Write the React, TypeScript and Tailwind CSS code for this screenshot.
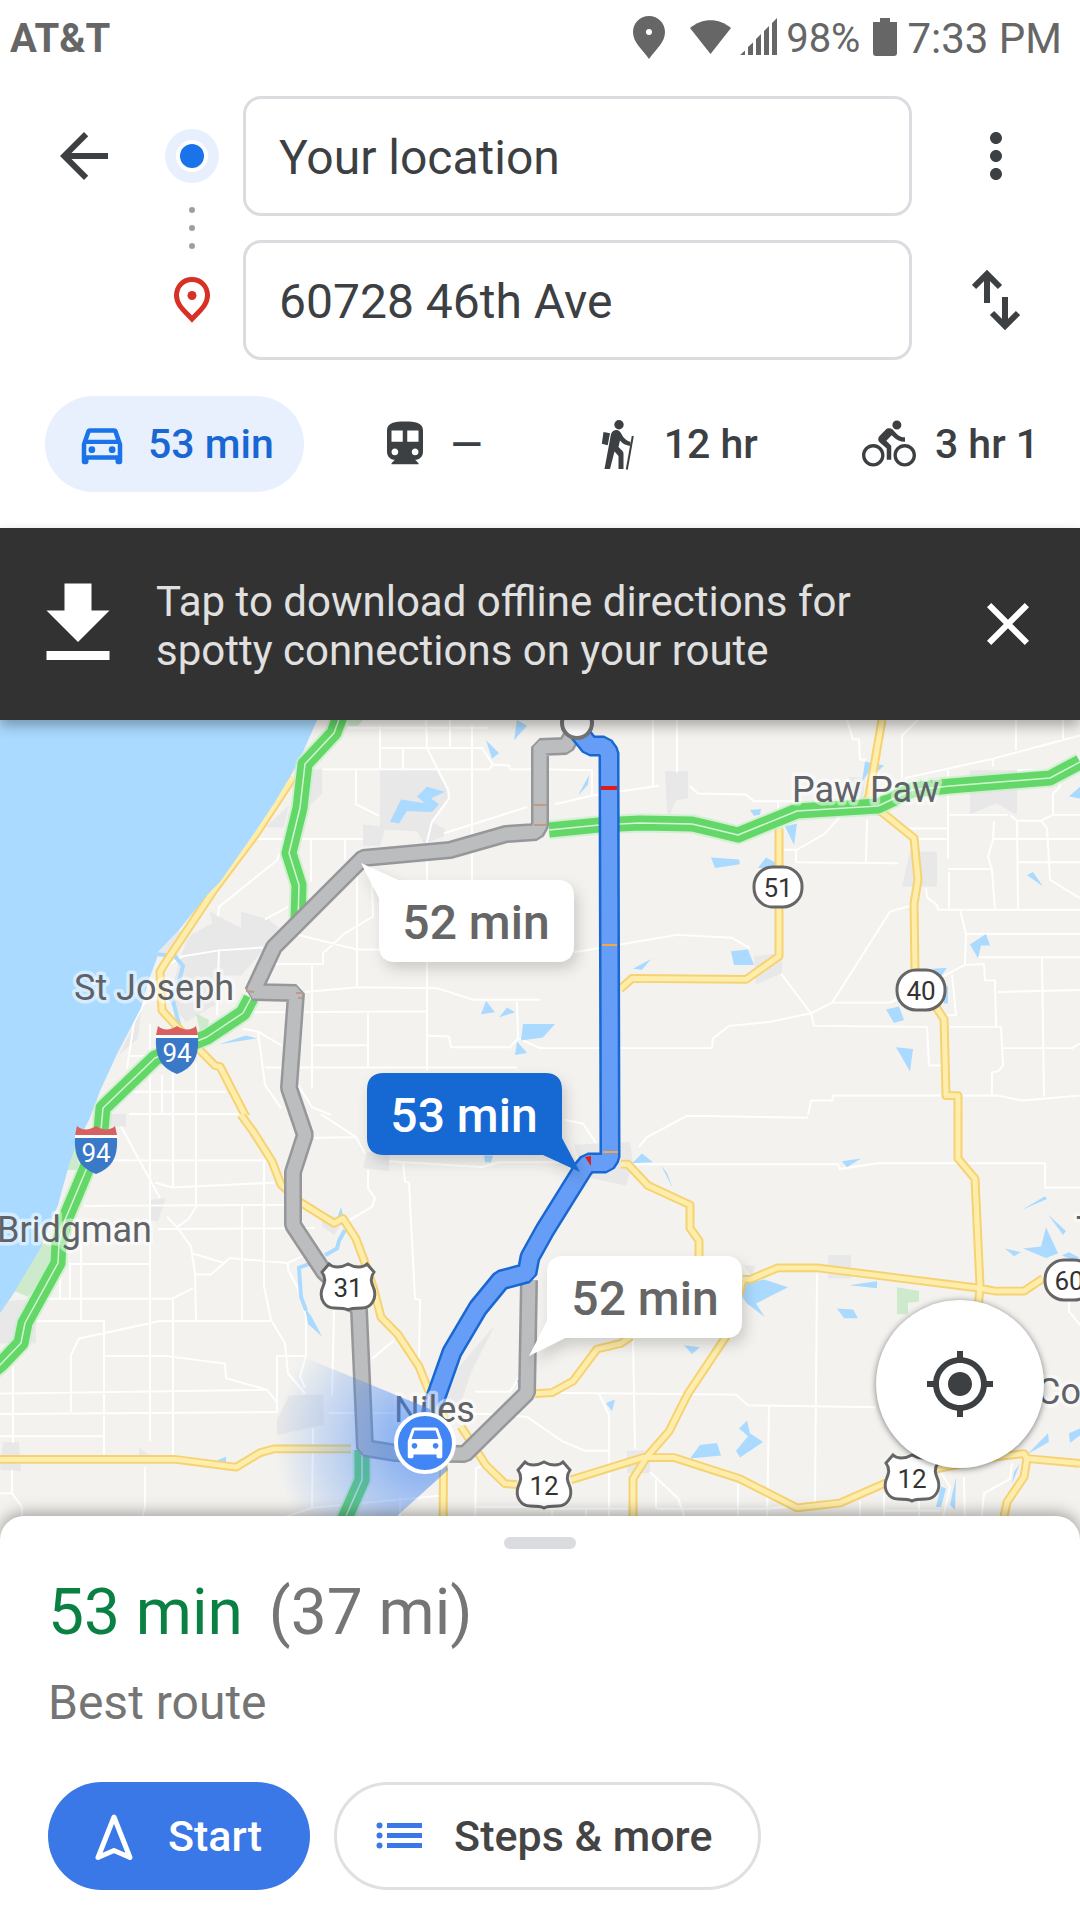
import React from "react";
import {
  MdArrowBack,
  MdClose,
  MdDirectionsBike,
  MdDirectionsSubway,
  MdFileDownload,
  MdMoreVert,
  MdMyLocation,
  MdOutlineDirectionsCar,
} from "react-icons/md";

const HikerIcon = ({ className }: { className?: string }) => (
  <svg viewBox="0 0 54 54" className={className} fill="currentColor">
    <circle cx="28" cy="7.700" r="4.700" />
    <path d="M12.500 15l6.500 1.300-2.300 11.900-5.900-1.400z" />
    <path d="M20 17q2-4.500 6-4 3 .5 5 5 2 4.500 8.500 7v4q-7-1-10.500-5.500L27.500 30l4 4q1 1 1 3v15h-5V39l-4-4.500L19 52h-5.500z" />
    <path d="M41.800 19l-6 33.500" fill="none" stroke="currentColor" strokeWidth="2" />
  </svg>
);

const modes = [
  { name: "Driving", label: "53 min", icon: MdOutlineDirectionsCar, active: true },
  { name: "Transit", label: "—", icon: MdDirectionsSubway, active: false },
  { name: "Walking", label: "12 hr", icon: HikerIcon, active: false },
  { name: "Cycling", label: "3 hr 1", icon: MdDirectionsBike, active: false },
];

const StatusBar = () => (
  <div className="flex h-[74px] items-center justify-between pt-[3px] pr-[18px] pl-[10px] text-[#666666]">
    <span className="text-[40px] leading-none font-bold">AT&amp;T</span>
    <div className="flex items-center">
      <svg viewBox="0 0 32 43" className="mr-[25px] mb-[3px] h-[43px] w-8" fill="currentColor">
        <path
          fillRule="evenodd"
          d="M16 0C7 0 0 7 0 16c0 10 8 16 16 27 8-11 16-17 16-27C32 7 25 0 16 0zm0 13a3 3 0 1 1 0 6 3 3 0 0 1 0-6z"
        />
      </svg>
      <svg viewBox="0 0 41 34" className="mr-[9px] mb-[3px] h-[34px] w-[41px]" fill="currentColor">
        <path d="M0 8C12-2.500 29-2.500 41 8L20.500 34z" />
      </svg>
      <svg viewBox="0 0 37 38" className="mr-[9px] mb-[3px] h-[38px] w-[37px]" fill="currentColor">
        <path d="M0 37l5-4.500v4.500zM8 29l5-4.500V37H8zM16 21l5-5v21h-5zM24 13l5-5v29h-5zM32 5l5-5v37h-5z" />
      </svg>
      <span className="text-[40px] leading-none">98%</span>
      <svg viewBox="0 0 24 38" className="mr-[10px] mb-[3px] ml-[13px] h-[38px] w-6" fill="currentColor">
        <path d="M7 0h10v4h7v31q0 3-3 3H3q-3 0-3-3V4h7z" />
      </svg>
      <span className="text-[42px] leading-none">7:33 PM</span>
    </div>
  </div>
);

const SearchPanel = () => (
  <div className="flex pt-[22px] text-[#3c4043]">
    <button aria-label="Back" className="ml-12 flex h-[120px] w-[72px] items-center justify-center">
      <MdArrowBack className="size-[72px]" />
    </button>

    {/* Origin to destination marks */}
    <svg viewBox="0 0 54 264" className="ml-[45px] h-[264px] w-[54px] shrink-0">
      <circle cx="27" cy="60" r="27" fill="#e8f0fe" />
      <circle cx="27" cy="60" r="16" fill="#fff" />
      <circle cx="27" cy="60" r="12" fill="#1a73e8" />
      <g fill="#9aa0a6">
        <circle cx="27" cy="114" r="3" />
        <circle cx="27" cy="132" r="3" />
        <circle cx="27" cy="150" r="3" />
      </g>
      <path
        d="M27 183.500c-9 0-15.500 7-15.500 16 0 9 7 14.500 15.500 23.500 8.500-9 15.500-14.500 15.500-23.500 0-9-6.500-16-15.500-16z"
        fill="none"
        stroke="#d93025"
        strokeWidth="5"
      />
      <circle cx="27" cy="199.500" r="4.500" fill="#d93025" />
    </svg>

    <div className="ml-6 flex min-w-0 flex-1 flex-col gap-6">
      <input
        aria-label="Starting point"
        defaultValue="Your location"
        className="h-[120px] w-full rounded-[18px] border-[3px] border-[#dadce0] px-[33px] pt-[2px] text-[48px] outline-none"
      />
      <input
        aria-label="Destination"
        defaultValue="60728 46th Ave"
        className="h-[120px] w-full rounded-[18px] border-[3px] border-[#dadce0] px-[33px] pt-[2px] text-[48px] outline-none"
      />
    </div>

    <div className="mr-12 ml-12 flex flex-col gap-6">
      <button aria-label="More options" className="flex h-[120px] w-[72px] items-center justify-center">
        <MdMoreVert className="size-[72px]" />
      </button>
      <button aria-label="Swap start and destination" className="flex h-[120px] w-[72px] items-center justify-center">
        <svg viewBox="0 0 48 60" className="h-[60px] w-12" fill="none" stroke="currentColor" strokeWidth="6">
          <path d="M15 33V5M2 17L15 4l13 13M33 27v28M20 43l13 13 13-13" />
        </svg>
      </button>
    </div>
  </div>
);

const TravelModes = () => (
  <nav className="flex gap-11 overflow-hidden px-[45px] pt-9 pb-9">
    {modes.map(({ name, label, icon: Icon, active }) => (
      <button
        key={name}
        aria-label={`${name} ${label}`}
        className={`flex h-24 shrink-0 items-center gap-[19px] rounded-full px-[30px] text-[41px] font-medium whitespace-nowrap ${
          active ? "bg-[#e8f0fe] text-[#1967d2]" : "text-[#3c4043]"
        }`}
      >
        <Icon className={`size-[54px] ${active ? "text-[#1a73e8]" : ""}`} />
        <span className="min-w-9 pt-[2px] text-left">{label}</span>
      </button>
    ))}
  </nav>
);

const OfflineBanner = () => (
  <div className="relative z-10 flex h-48 items-center bg-[#323232] pr-9 shadow-[0_6px_12px_rgba(0,0,0,0.3)]">
    <MdFileDownload className="ml-6 size-[108px] shrink-0 text-white" />
    <p className="ml-6 flex-1 pt-1 text-[42px] leading-[49px] text-[#e0e0e0]">
      Tap to download offline directions for
      <br />
      spotty connections on your route
    </p>
    <button aria-label="Dismiss" className="text-white">
      <MdClose className="size-[72px]" />
    </button>
  </div>
);

type Tile = {
  urban: string;
  parks: string;
  minor: string;
  lakes: string;
  rivers: string;
  major: string;
};

const north: Tile = {
  urban:
    "M380 52h56l13 24v5l-17 24 13 8-1 7-20 8-7-13-32-2-5 17h-17v-22l17 2zM311 51h11v25l-12 12zM289 88l-24 23h19zM191 222l21-12-2-12 31 17v-17l28 8 10 9-14 21-24 28h-21v27l-34 21-17-21 10-41 7-21zM157 241l22-24 6 8-17 20zM141 300l-3 29-19 17zM665 53h23v28l-12 2-6 15-3-3zM970 52h47v46l-21-12-26 12zM910 136h27v36h-35zM754 244l28-3v21l-26 11zM849 59l16 1-2 22-10-7z",
  parks: "M348 0h15l-5 6h-10zM196 303l13 7-2 9-7 3z",
  minor:
    "M380 29h102l11 17-4 5H322M493 46l16 1 1 4h22M380 6v45M403 29v22M426 0l1 29 21 43 1 9-17 24-5 21v236M450 0v29M472 5v160M348 8h140M356 51v36l23 12M257 123h106M444 117l83-27M311 123v44M345 123v22M284 124l-7 21-58 48-1 10M357 160v116M298 222l59 15h22M265 206l23-13M372 167l1 36-29 18-21 20v11h-56M170 252l13-8 36-6 44-3M219 238l-2 67M305 281l53-5 79 1 36 12h67M253 302l173-1M312 253v128M368 302v58M312 336h56M243 319l15 3 23 14M258 322l7 55 16 24M265 359h252M427 326l22 1 2 11h59l8-9-1-38M518 329l22 10h172l1-10 16-13 40-4 42-9 21-11 58-94 20-6M298 377l14 23 19 8M145 291l-11 21-7 48M129 347h21M150 314v95M162 367v42M173 360v49M196 353v56M127 384h99M129 407h112M549 51l43 1v26l-37 9M592 78l67-10M653 0v68M677 0v54M690 68l8 8 48 1 8 7h41M778 83v27M847 0l6 20h6l1 21h6M918 0l-16 16v44M905 60l88-20 87-24M1016 0v31M1063 0v21M993 40v8M840 100l-16 18-27 16h-14M796 134v13l102 1M867 103l-1 44M948 52v91M949 157v39M905 112h43M919 123h29M948 154h43M1017 52h38l5 17-7 7v22l-12 6h-24l-7-6M948 98h60M1041 104l6 8 3 53 30 19M994 105l-1 19-5 17 4 14 3 41M1017 104l1 92M994 123h86M1018 147h62M1053 98h27M926 174l1 9 10 8 1 5h142M960 196l6 25-1 31M966 221h114M943 265l22-12 19-1 1 17h10l1 48M979 245h101M1042 245l2 144M998 281l82-2M950 317h51l2 40-5 6-6 1v23M1003 339h69l8-5M950 388h48l24 5 58-5M941 388H833l-1 5h-21l-3 15M574 240l103-18 55 3 18 11M832 292h58l12-6M781 262l30 41 3 13 113 1 2 40h12M952 263l4 42h-15",
  lakes:
    "M427 69l18 5-14 7 8 6-7 8-25-1-8 13-9-2 11-23 24 4-8-7zM517 0l10 6-13 15zM486 21l13 13-7 6zM486 290l9 12-14 2zM507 297l8 5-16 5zM523 314h32l-12 14-22 3zM517 332l10 12-12 2zM219 335l27-9 11 3zM589 57l-1 10-10 11zM750 93l11-1-1 6-6 1zM785 110l12-3-3 22zM711 142l28 2 1 5-25 4zM766 142l9 5v6h-17zM731 239l17-2 6 16h-20zM651 247l-9 11-9-1zM865 43l19 4-5 5-8-2-9 14zM1027 160l6-3 10 15zM1069 79l11-10v12zM970 232l16-11 4 12-9 0-3 13zM933 257l14-1-6 9zM944 275h4v18h-4zM886 299l13-3 5 14-10 3zM896 338l17 2-3 23z",
  rivers: "M157 242l18 2 8 10-4 16-7 16 8 32",
  major:
    "M293 59l-38 60-40 55-51 79-4 7 2 40 15 17 38 40 5 1 26 52M779 112v132l-33 24-114-1-12 11M882 0l-13 78-3 8 18 11 30 25 4 43-4 25 1 70 11 21 18 28 2 79h12v24",
};

const south: Tile = {
  urban:
    "M110 390h16v17h-16zM150 483l16-2-8 24-8-1zM367 433l22 3v17l-26-3zM322 495l22 9-10 15-12-9zM0 588l26-2 10 24v21H0zM289 685l34-1 1 31-47 11v-16zM3 733h16l2 30-21-1zM495 612l-23 47-14 41-17-17 14-23zM139 738l14 12h-14zM574 426l56-3 3 22-7 23-41-9zM828 540h23v24h-23zM743 550l12 1-3 11zM627 742h23v23h-23z",
  parks: "M69 421l7 10 4 21H65zM40 528h12l3 22-27 33-16-7zM897 573l22 4v11l-11 1v12h-11z",
  minor:
    "M129 394h112M121 407l39 74M98 442h171M155 465l17 5 102-5M84 489l200-1M158 513l157-1M150 390v342M173 390v80M196 390v100l-7 12-12 9M167 500l10 11 14 20 4 28 1 50M192 538l32 10 6-5 58 5 15-7M224 548l-13 12h-16M69 549h81M34 585h138l21-11M36 608h68v138M71 702v-59l8-17 81-18h110M105 644h60l60 8 1 15 41 12 10 13M277 702v-58h29M0 683l267-4M0 704l277-2M13 655v79M0 727h103M81 528v79M60 555v30M70 548v37M264 442v130l7 35 14 24 3 31 17 21M242 488v119M173 586v162M288 548v7l9 17 9 31v41l-6 21 5 12M334 597l-2 88M368 452v19l7 10-3 9-28 17M315 390l41 28 9 17M305 419l51-1M403 443l2 21 4 1 6 120 5 1-1 66M389 443l93 6 17-5h111M372 647l22-19M475 681h35l10-16M329 703h71M458 704h31l38 3 35 25 23 10h24M313 719l-1 82-26 9M312 801l132-13M145 759v41l-5 20M12 762v24l10 14v20M0 786h12M475 820l1-60 11-3M476 800h55M400 790v30M565 400l18 4 13 20M808 398l-121-2-40 22-8 10M631 446h207l2 5 37-6h168v25h35M817 559l-2 236M633 626l2 114M552 682l184 2 12 11 128 2M599 683l10 22v115M769 696l-2 124M650 764l28 27 10 29M656 772v30M738 776v44M540 802h91M657 802h110l32-3M1069 586v12l11 14M1012 755l-2 16-26 15-3 34M964 769l1 51M941 765l9 14-9 41M884 786v34M919 794v26M884 804h56M552 802v18M586 802v18M860 794v26",
  lakes:
    "M341 490l3 14-7-2zM305 594l3 17 14 13-10-20zM484 437h9l-2 7h-6zM226 748v6l-9-2zM632 445l10-10 11 9zM661 447l6 8 6 16zM842 443l19-3-14 9zM742 583l5-14 17-4 24 8-32 17 9 14-18-14zM849 571l28-4v7zM837 595l16 1 5 9h-14zM684 633l16 2-8 7zM606 693l9-4-3 12zM739 719l8-8 3 13 13 9-23 16-4-7 12-15zM690 750l10-14 17-2 4 13zM1005 533l16 4-7 4zM1023 533l18-2 5-20 12 27-12 5zM1048 498l18 17-3 4zM1022 493l23-14 2 3zM1062 540l7-3 11 6-8 2zM1028 745l20-21 1 9zM1069 724l11-5v7l-10 8zM941 779l5 2-5 19h-5zM956 769l-1 34-5-5zM517 669h4l-2 10zM1020 755l-8 21 2-12z",
  rivers: "M345 514l-6 11-2 8-12 7M309 549l-10 4 2 30 5 14",
  major:
    "M241 395l12 17 19 31 9 24 19 18 34 22 9-5 13 21 9 25 9 28 7 28 17 18 21 33 12 31 13 21-1 113M461 717l25 40 19 19 12 1M0 751h176l60 8 24-15 14-4h77M571 772l72-23h31l66 22 57 30 43-5 44-20 56-16 58-12 26-3 3 5 53 5M1027 750l-3 19-17 26-5 25M633 820v-49l14-23 22-26 19-39 38-59 17-58M743 565h7l28-12h39l162 21 16 3h29l19-13M535 683l17-1 21-12 24-33 24-6 10-7M621 446h7l20 22 42 20v24l9 13v17M958 390v50l17 21 5 111-2 25",
};

const MapTile = ({ tile }: { tile: Tile }) => (
  <>
    <path d={tile.urban} fill="#e8e8e8" />
    <path d={tile.parks} fill="#cdeacd" />
    <path d={tile.minor} fill="none" stroke="#fff" strokeWidth="2" strokeLinejoin="round" />
    <path d={tile.lakes} fill="#aadaff" />
    <path d={tile.rivers} fill="none" stroke="#aadaff" strokeWidth="4" />
    <path d={tile.major} fill="none" stroke="#f6d272" strokeWidth="9" strokeLinejoin="round" />
    <path d={tile.major} fill="none" stroke="#ffeeab" strokeWidth="5" strokeLinejoin="round" />
  </>
);

const highways =
  "M341-6l-7 19-29 31-5 44-11 45 10 32-1 37M251 278l-8 15-36 24-52 21-52 50-2 22-15 40-21 50-6 23-1 20-33 60-4 20-21 22-10 8M549 110l50-5 41-2 52 1 13 3 33 8 59-24 81-5 34-16 38-4 100-8 30-16M362 730v30l-16 36-10 24";

const greyRoutes =
  "M577 6l-11 20-26 1v78l-4 7-30 2-56 16-87 8-89 89-21 45 43 1-7 95 16 47-12 37v53l31 47 20 18 15 20 6 138 31 5 69 1 62-61 2-113";

const blueRoute =
  "M577 10l13 16h14l5 7 1 404-4 6h-18l-5 6-38 61-15 27-3 16-26 7-23 28-26 44-16 45-12 40";

const InterstateShield = ({ x, y }: { x: number; y: number }) => (
  <g transform={`translate(${x} ${y})`}>
    <path d="M-21 7H21V14H-21z" fill="#fff" />
    <path d="M-19 0C-14 5-6 4 0 0 6 4 14 5 19 0L21 9H-21z" fill="#d96060" />
    <path d="M-21 12H21C22 31 16 42 0 48-16 42-22 31-21 12z" fill="#3a78c8" />
    <text y="36" textAnchor="middle" fontSize="26" fill="#fff">
      94
    </text>
  </g>
);

const UsShield = ({ x, y, num }: { x: number; y: number; num: string }) => (
  <g transform={`translate(${x} ${y})`}>
    <path
      d="M-19-23C-15-19-7-19 0-23 7-19 15-19 19-23L26-15C21-8 24-3 26 2 29 12 23 21 14 21 8 21 3 21 0 23-3 21-8 21-14 21-23 21-29 12-26 2-24-3-21-8-26-15z"
      fill="#fff"
      stroke="#666"
      strokeWidth="3"
    />
    <text y="10" textAnchor="middle" fontSize="26" fill="#333">
      {num}
    </text>
  </g>
);

const StateShield = ({ x, y, num }: { x: number; y: number; num: string }) => (
  <g transform={`translate(${x} ${y})`}>
    <rect x="-24" y="-20" width="48" height="40" rx="19" fill="#fff" stroke="#666" strokeWidth="3" />
    <text y="10" textAnchor="middle" fontSize="26" fill="#333">
      {num}
    </text>
  </g>
);

const towns = [
  { name: "Paw Paw", x: 792, y: 82 },
  { name: "St Joseph", x: 74, y: 280 },
  { name: "Bridgman", x: -3, y: 522 },
  { name: "Niles", x: 394, y: 702 },
  { name: "Co", x: 1037, y: 684 },
  { name: "T", x: 1076, y: 522 },
];

const RouteMap = () => (
  <svg
    viewBox="0 0 1080 820"
    preserveAspectRatio="xMidYMin slice"
    className="absolute inset-0 h-full w-full"
    role="img"
    aria-label="Map of the routes"
  >
    <defs>
      <clipPath id="north">
        <path d="M0 0h1080v408H0z" />
      </clipPath>
      <clipPath id="south">
        <path d="M0 394h1080v450H0z" />
      </clipPath>
      <radialGradient id="beam" gradientUnits="userSpaceOnUse" cx="425" cy="723" r="150">
        <stop offset="0.15" stopColor="#4285f4" stopOpacity="0.6" />
        <stop offset="1" stopColor="#4285f4" stopOpacity="0" />
      </radialGradient>
      <filter id="lift" x="-20%" y="-20%" width="140%" height="160%">
        <feDropShadow dx="4" dy="7" stdDeviation="7" floodOpacity="0.16" />
      </filter>
    </defs>

    <rect width="1080" height="820" fill="#f3f2ee" />
    <g transform="scale(1 0.968)" clipPath="url(#north)">
      <MapTile tile={north} />
    </g>
    <g transform="translate(0 12.500) scale(1 0.968)" clipPath="url(#south)">
      <MapTile tile={south} />
    </g>
    <path
      d="M0 0h317l-14 32-9 18-19 32-20 30-35 50-13 13-28 35-22 23v5l-9 24-7 26-24 46-17 37-11 29-13 25-7 20-11 40-6 14-12 30-28 47-12 17z"
      fill="#aadaff"
    />

    {/* Highways with light traffic */}
    <g fill="none" strokeLinejoin="round">
      <path d={highways} stroke="#c4efc6" strokeWidth="19" opacity="0.7" />
      <path d={highways} stroke="#63d868" strokeWidth="15" />
      <path d={highways} stroke="#d4f5d4" strokeWidth="1.500" />
    </g>

    <g fill="none" strokeLinejoin="bevel">
      <path d={greyRoutes} stroke="#95979a" strokeWidth="18" />
      <path d={greyRoutes} stroke="#bbbdbf" strokeWidth="13" />
      <path d="M534 85h13M534 105h13M246 271l8 1M296 273h6M298 278h4" stroke="#c09a84" strokeWidth="2" />
      <path d={blueRoute} stroke="#1967d2" strokeWidth="21" />
      <path d={blueRoute} stroke="#669df6" strokeWidth="16" />
    </g>
    <path d="M601 66h16v4h-16zM585 437l6-1v10z" fill="#e01b1b" />
    <path d="M602 224h15v2h-15zM603 431h15v2h-15z" fill="#f5a742" />
    <circle cx="577" cy="3" r="15" fill="#fff" stroke="#757575" strokeWidth="4" />

    {/* Town names and shields */}
    <g fontSize="36" fill="#5f6368" stroke="#fff" strokeOpacity="0.5" strokeWidth="7" paintOrder="stroke" strokeLinejoin="round">
      {towns.map((town) => (
        <text key={town.name} x={town.x} y={town.y}>
          {town.name}
        </text>
      ))}
    </g>
    <InterstateShield x={177} y={306} />
    <InterstateShield x={96} y={406} />
    <UsShield x={348} y={567} num="31" />
    <UsShield x={544} y={765} num="12" />
    <UsShield x={912} y={758} num="12" />
    <StateShield x={778} y={167} num="51" />
    <StateShield x={921} y={270} num="40" />
    <StateShield x={1069} y={560} num="60" />

    {/* Current position, looking west */}
    <path d="M430 689L240 611v250h85l123-111z" fill="url(#beam)" />
    <circle cx="425" cy="723" r="29" fill="#4285f4" stroke="#fff" strokeWidth="4" />
    <path
      transform="translate(402 698) scale(1.920)"
      d="M18.920 6.010C18.720 5.420 18.160 5 17.500 5h-11c-.660 0-1.210.420-1.420 1.010L3 12v8c0 .550.450 1 1 1h1c.550 0 1-.450 1-1v-1h12v1c0 .550.450 1 1 1h1c.550 0 1-.450 1-1v-8l-2.080-5.990zM6.500 16c-.830 0-1.500-.670-1.500-1.500S5.670 13 6.500 13s1.500.670 1.500 1.500S7.330 16 6.500 16zm11 0c-.830 0-1.500-.670-1.500-1.500s.670-1.500 1.500-1.500 1.500.670 1.500 1.500-.670 1.500-1.500 1.500zM5 11l1.500-4.500h11L19 11H5z"
      fill="#fff"
    />

    {/* Travel time callouts */}
    <g fontSize="48" fontWeight="500" textAnchor="middle">
      <path
        filter="url(#lift)"
        d="M361 143l37 17h159q17 0 17 17v48q0 17-17 17H396q-17 0-17-17v-47z"
        fill="#fff"
      />
      <text x="476" y="219" fill="#666">
        52 min
      </text>
      <path
        filter="url(#lift)"
        d="M580 452l-37-17H384q-17 0-17-17v-48q0-17 17-17h161q17 0 17 17v48z"
        fill="#1967d2"
      />
      <text x="464" y="412" fill="#fff">
        53 min
      </text>
      <path
        filter="url(#lift)"
        d="M529 636l36-18h160q17 0 17-17v-48q0-17-17-17H564q-17 0-17 17v48z"
        fill="#fff"
      />
      <text x="645" y="595" fill="#666">
        52 min
      </text>
    </g>
  </svg>
);

const RouteSheet = () => (
  <section className="relative -mt-6 rounded-t-[24px] bg-white px-12 pb-[30px] shadow-[0_-3px_15px_rgba(0,0,0,0.35)]">
    <div className="flex justify-center pt-[21px]">
      <div className="h-3 w-[72px] rounded-full bg-[#dadce0]" />
    </div>
    <h1 className="mt-6 flex gap-[26px] text-[64px] leading-[80px] font-normal">
      <span className="text-[#0b8043]">53 min</span>
      <span className="text-[#757575]">(37 mi)</span>
    </h1>
    <p className="mt-5 text-[48px] leading-[60px] text-[#757575]">Best route</p>
    <div className="mt-[49px] flex gap-6">
      <button className="flex h-[108px] items-center gap-[27px] rounded-full bg-[#3b78e7] pr-12 pl-[39px] text-[43px] font-medium text-white">
        <svg viewBox="0 0 54 54" className="size-[54px]" fill="none" stroke="currentColor" strokeWidth="5">
          <path d="M27 8L11 48.500l16-7 16 7z" strokeLinejoin="round" />
        </svg>
        Start
      </button>
      <button className="flex h-[108px] items-center gap-[27px] rounded-full border-[3px] border-[#e0e0e0] pr-[46px] pl-9 text-[43px] font-medium text-[#444444]">
        <svg viewBox="0 0 54 54" className="size-[54px]" fill="#3b78e7">
          <path d="M14 14h35v5H14zM14 24h35v5H14zM14 34h35v5H14z" />
          <circle cx="6.500" cy="16.500" r="3" />
          <circle cx="6.500" cy="26.500" r="3" />
          <circle cx="6.500" cy="36.500" r="3" />
        </svg>
        Steps &amp; more
      </button>
    </div>
  </section>
);

const App = () => {
  return (
    <div className="flex min-h-screen flex-col bg-white font-[Roboto,sans-serif]">
      <header>
        <StatusBar />
        <SearchPanel />
        <TravelModes />
      </header>
      <OfflineBanner />
      <main className="relative min-h-[500px] flex-1 overflow-hidden">
        <RouteMap />
        <button
          aria-label="Center on my location"
          className="absolute right-9 bottom-[72px] flex size-[168px] items-center justify-center rounded-full bg-white text-[#3c4043] shadow-[0_1px_6px_rgba(0,0,0,0.5)]"
        >
          <MdMyLocation className="size-[72px]" />
        </button>
      </main>
      <RouteSheet />
    </div>
  );
};

export default App;
